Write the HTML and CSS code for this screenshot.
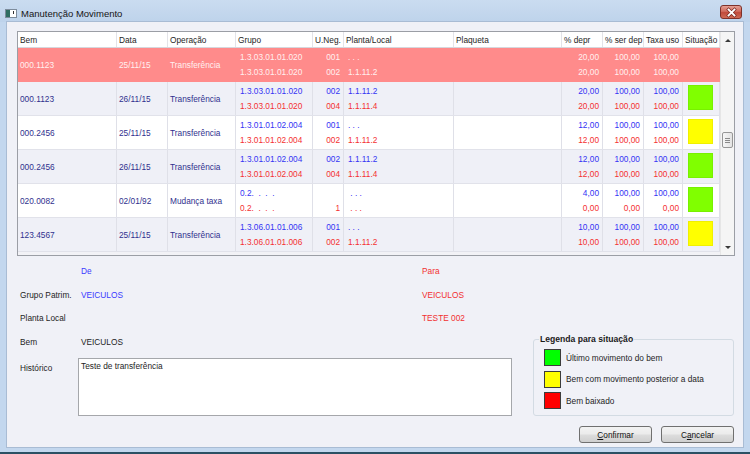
FILE: index.html
```html
<!DOCTYPE html>
<html>
<head>
<meta charset="utf-8">
<link rel="stylesheet" href="styles.css">
</head>
<body>
<div class="window">
  <div class="titlebar">
    <svg class="appicon" width="12" height="9" viewBox="0 0 12 9">
      <rect x="0.5" y="0.5" width="11" height="8" fill="#ffffff" stroke="#7d8c9c"/>
      <rect x="1" y="1" width="4" height="7" fill="#2f6e62"/>
      <rect x="8" y="2" width="1" height="3" fill="#333"/>
    </svg>
    <span class="title">Manutenção Movimento</span>
    <div class="close">
      <svg width="21" height="13" viewBox="0 0 21 13">
        <path d="M7.5 3.5 L13.5 9.5 M13.5 3.5 L7.5 9.5" stroke="#7a2a22" stroke-width="3.2" stroke-linecap="square"/>
        <path d="M7.5 3.5 L13.5 9.5 M13.5 3.5 L7.5 9.5" stroke="#ffffff" stroke-width="1.8" stroke-linecap="square"/>
      </svg>
    </div>
  </div>

  <div class="client">
    <div class="grid">
      <div class="table">
        <div class="row head">
          <div class="c">Bem</div>
          <div class="c">Data</div>
          <div class="c">Operação</div>
          <div class="c">Grupo</div>
          <div class="c">U.Neg.</div>
          <div class="c">Planta/Local</div>
          <div class="c">Plaqueta</div>
          <div class="c">% depr</div>
          <div class="c">% ser dep</div>
          <div class="c">Taxa uso</div>
          <div class="c">Situação</div>
        </div>

        <div class="row sel">
          <div class="c s">000.1123</div>
          <div class="c s">25/11/15</div>
          <div class="c s">Transferência</div>
          <div class="c t p3"><span>1.3.03.01.01.020</span><span>1.3.03.01.01.020</span></div>
          <div class="c t r"><span>001</span><span>002</span></div>
          <div class="c t p3"><span>. . .</span><span>1.1.11.2</span></div>
          <div class="c"></div>
          <div class="c t r"><span>20,00</span><span>20,00</span></div>
          <div class="c t r"><span>100,00</span><span>100,00</span></div>
          <div class="c t r"><span>100,00</span><span>100,00</span></div>
          <div class="c"></div>
        </div>

        <div class="row alt">
          <div class="c s">000.1123</div>
          <div class="c s">26/11/15</div>
          <div class="c s">Transferência</div>
          <div class="c t p3"><span class="b">1.3.03.01.01.020</span><span class="v">1.3.03.01.01.020</span></div>
          <div class="c t r"><span class="b">002</span><span class="v">004</span></div>
          <div class="c t p3"><span class="b">1.1.11.2</span><span class="v">1.1.11.4</span></div>
          <div class="c"></div>
          <div class="c t r"><span class="b">20,00</span><span class="v">20,00</span></div>
          <div class="c t r"><span class="b">100,00</span><span class="v">100,00</span></div>
          <div class="c t r"><span class="b">100,00</span><span class="v">100,00</span></div>
          <div class="c"><div class="sw green"></div></div>
        </div>

        <div class="row">
          <div class="c s">000.2456</div>
          <div class="c s">25/11/15</div>
          <div class="c s">Transferência</div>
          <div class="c t p3"><span class="b">1.3.01.01.02.004</span><span class="v">1.3.01.01.02.004</span></div>
          <div class="c t r"><span class="b">001</span><span class="v">002</span></div>
          <div class="c t p3"><span class="b">. . .</span><span class="v">1.1.11.2</span></div>
          <div class="c"></div>
          <div class="c t r"><span class="b">12,00</span><span class="v">12,00</span></div>
          <div class="c t r"><span class="b">100,00</span><span class="v">100,00</span></div>
          <div class="c t r"><span class="b">100,00</span><span class="v">100,00</span></div>
          <div class="c"><div class="sw yellow"></div></div>
        </div>

        <div class="row alt">
          <div class="c s">000.2456</div>
          <div class="c s">26/11/15</div>
          <div class="c s">Transferência</div>
          <div class="c t p3"><span class="b">1.3.01.01.02.004</span><span class="v">1.3.01.01.02.004</span></div>
          <div class="c t r"><span class="b">002</span><span class="v">004</span></div>
          <div class="c t p3"><span class="b">1.1.11.2</span><span class="v">1.1.11.4</span></div>
          <div class="c"></div>
          <div class="c t r"><span class="b">12,00</span><span class="v">12,00</span></div>
          <div class="c t r"><span class="b">100,00</span><span class="v">100,00</span></div>
          <div class="c t r"><span class="b">100,00</span><span class="v">100,00</span></div>
          <div class="c"><div class="sw green"></div></div>
        </div>

        <div class="row">
          <div class="c s">020.0082</div>
          <div class="c s">02/01/92</div>
          <div class="c s">Mudança taxa</div>
          <div class="c t p3"><span class="b">0.2.&nbsp; .&nbsp; .&nbsp; .</span><span class="v">0.2.&nbsp; .&nbsp; .&nbsp; .</span></div>
          <div class="c t r"><span class="b">&nbsp;</span><span class="v">1</span></div>
          <div class="c t p3"><span class="b">&nbsp;. . .</span><span class="v">&nbsp;. . .</span></div>
          <div class="c"></div>
          <div class="c t r"><span class="b">4,00</span><span class="v">0,00</span></div>
          <div class="c t r"><span class="b">100,00</span><span class="v">0,00</span></div>
          <div class="c t r"><span class="b">100,00</span><span class="v">0,00</span></div>
          <div class="c"><div class="sw green"></div></div>
        </div>

        <div class="row alt">
          <div class="c s">123.4567</div>
          <div class="c s">25/11/15</div>
          <div class="c s">Transferência</div>
          <div class="c t p3"><span class="b">1.3.06.01.01.006</span><span class="v">1.3.06.01.01.006</span></div>
          <div class="c t r"><span class="b">001</span><span class="v">002</span></div>
          <div class="c t p3"><span class="b">. . .</span><span class="v">1.1.11.2</span></div>
          <div class="c"></div>
          <div class="c t r"><span class="b">10,00</span><span class="v">10,00</span></div>
          <div class="c t r"><span class="b">100,00</span><span class="v">100,00</span></div>
          <div class="c t r"><span class="b">100,00</span><span class="v">100,00</span></div>
          <div class="c"><div class="sw yellow"></div></div>
        </div>
      </div>

      <div class="vscroll">
        <div class="sbtn"><span class="arr up"></span></div>
        <div class="track"><div class="thumb"><i></i><i></i><i></i></div></div>
        <div class="sbtn"><span class="arr down"></span></div>
      </div>
    </div>

    <div class="lower">
      <div class="form">
        <div class="lab"></div>
        <div class="val de">De</div>
        <div class="val para">Para</div>

        <div class="lab">Grupo Patrim.</div>
        <div class="val de">VEICULOS</div>
        <div class="val para">VEICULOS</div>

        <div class="lab">Planta Local</div>
        <div class="val de"></div>
        <div class="val para">TESTE 002</div>

        <div class="lab">Bem</div>
        <div class="val dark">VEICULOS</div>
        <div class="val"></div>

        <div class="lab hist">Histórico</div>
        <div class="memo-wrap"><div class="memo">Teste de transferência</div></div>
      </div>

      <div class="side">
        <fieldset class="legend">
          <legend>Legenda para situação</legend>
          <div class="items">
            <div class="item"><span class="lsw g"></span>Último movimento do bem</div>
            <div class="item"><span class="lsw y"></span>Bem com movimento posterior a data</div>
            <div class="item"><span class="lsw rd"></span>Bem baixado</div>
          </div>
        </fieldset>
        <div class="buttons">
          <div class="btn"><u>C</u>onfirmar</div>
          <div class="btn">C<u>a</u>ncelar</div>
        </div>
      </div>
    </div>
  </div>
  <div class="bottomline"></div>
</div>
</body>
</html>
```

FILE: styles.css
```css
* { box-sizing: border-box; }
html, body { margin: 0; padding: 0; }
body {
  width: 750px;
  height: 454px;
  overflow: hidden;
  background: #c3d7ee;
  font-family: "Liberation Sans", Arial, sans-serif;
  font-size: 8.3px;
  color: #1e1e1e;
}
.window {
  display: flex;
  flex-direction: column;
  width: 750px;
  height: 454px;
}

/* title bar */
.titlebar {
  height: 22px;
  flex: none;
  display: flex;
  align-items: flex-start;
  background: linear-gradient(#cadcf0, #bed3eb);
}
.appicon { margin: 9px 0 0 5px; flex: none; }
.title {
  margin: 8px 0 0 4px;
  font-size: 9.5px;
  line-height: 12px;
  color: #151515;
}
.close {
  margin: 5px 8px 0 auto;
  width: 22px;
  height: 14px;
  border: 1px solid #7e3129;
  border-radius: 3px;
  background: linear-gradient(#e5a093, #d06a5c 45%, #c04a3b 55%, #cf6a55);
  display: flex;
  align-items: center;
  justify-content: center;
  overflow: hidden;
}
.close svg { display: block; margin: -1px; }

/* client area */
.client {
  margin: 0 7px;
  height: 425px;
  flex: none;
  background: #f0f1f7;
  box-shadow: 0 0 0 1px #a9bcd4;
  padding: 9px 0 0 10px;
}

/* grid */
.grid {
  width: 718px;
  height: 225px;
  border: 1px solid #9b9ea5;
  display: flex;
  background: #f2f2f6;
}
.table {
  width: 702px;
  display: flex;
  flex-direction: column;
}
.row {
  display: grid;
  grid-template-columns: 99px 51px 68px 77px 31px 110px 108px 41px 41px 39px 37px;
  height: 34px;
  flex: none;
  background: #ffffff;
  border-bottom: 1px solid #e1e2ea;
}
.row.alt { background: #eff0f7; }
.c {
  border-right: 1px solid #dfe0e8;
  padding: 0 3px 0 2px;
  display: flex;
  flex-direction: column;
  white-space: nowrap;
  overflow: hidden;
}
.c.s {
  justify-content: center;
  line-height: 12px;
  padding-top: 1px;
  color: #30308e;
}
.c.t {
  padding-top: 2px;
  line-height: 15px;
}
.c.p3 { padding-left: 4px; }
.c.r { align-items: flex-end; }
.b { color: #3434f4; }
.v { color: #f43030; }

.row.head {
  height: 16px;
  background: #ffffff;
  border-bottom: 1px solid #d6d7dd;
}
.head .c {
  line-height: 15px;
  padding-left: 2px;
  padding-top: 1px;
  color: #1e1e1e;
  border-right-color: #e3e3e8;
}

.row.sel { background: #ff8b8b; border-bottom-color: #ff8b8b; }
.sel .c { border-right-color: #ff8b8b; color: #fff0f0; }

.sw {
  width: 25px;
  height: 25px;
  margin: 3px 0 0 3px;
  border: 1px solid rgba(0, 0, 0, 0.06);
}
.sw.green { background: #80ff00; }
.sw.yellow { background: #ffff00; }

/* scrollbar */
.vscroll {
  width: 14px;
  display: flex;
  flex-direction: column;
  background: #f5f5f5;
  border-left: 1px solid #e6e6e6;
}
.sbtn {
  height: 16px;
  flex: none;
  display: flex;
  align-items: center;
  justify-content: center;
}
.arr {
  width: 0;
  height: 0;
  border-left: 3px solid transparent;
  border-right: 3px solid transparent;
}
.arr.up { border-bottom: 3px solid #3a3a3a; }
.arr.down { border-top: 3px solid #3a3a3a; }
.track { flex: 1; padding: 84px 0 0 1px; }
.thumb {
  width: 11px;
  height: 16px;
  border: 1px solid #979797;
  border-radius: 2px;
  background: linear-gradient(90deg, #f7f7f7, #e3e3e3);
  display: flex;
  flex-direction: column;
  align-items: center;
  justify-content: center;
  gap: 1px;
}
.thumb i {
  display: block;
  width: 5px;
  height: 1px;
  background: #8a8a8a;
}

/* lower area */
.lower {
  display: flex;
  padding-left: 3px;
}
.form {
  width: 495px;
  padding-top: 3px;
  display: grid;
  grid-template-columns: 60px 341px 91px;
  grid-template-rows: 24px 24px 22px 26px 61px;
  align-items: center;
}
.lab { color: #1e1e1e; line-height: 12px; }
.val { line-height: 12px; padding-left: 1px; }
.val.de { color: #3a3aff; }
.val.para { color: #f23030; }
.val.dark { color: #1e1e1e; }
.lab.hist { align-self: start; padding-top: 7px; }
.memo-wrap {
  grid-column: 2 / 4;
  align-self: start;
  padding-top: 3px;
}
.memo {
  margin-left: -2px;
  width: 434px;
  height: 58px;
  background: #ffffff;
  border: 1px solid #a5a7ab;
  padding: 1px 2px;
  line-height: 12px;
  color: #1e1e1e;
}

.side {
  margin-left: 18px;
  width: 201px;
  display: flex;
  flex-direction: column;
}
.legend {
  margin: 77px 0 0 0;
  padding: 0 0 0 10px;
  height: 83px;
  border: 1px solid #d3dbe3;
  border-radius: 3px;
  min-width: 0;
}
.legend legend {
  padding: 0 1px;
  margin-left: -5px;
  font-weight: bold;
  font-size: 8.6px;
  line-height: 12px;
  color: #1a1a1a;
}
.items {
  padding-top: 4px;
  display: flex;
  flex-direction: column;
  gap: 4.5px;
}
.item {
  display: flex;
  align-items: center;
  height: 17px;
  line-height: 12px;
  color: #1e1e1e;
}
.lsw {
  width: 17px;
  height: 17px;
  border: 1px solid #3c3c3c;
  margin-right: 5px;
  flex: none;
}
.lsw.g { background: #00ff00; }
.lsw.y { background: #ffff00; }
.lsw.rd { background: #ff0000; }

.buttons {
  margin-top: 10px;
  display: flex;
  justify-content: flex-end;
  gap: 9px;
}
.btn {
  width: 73px;
  height: 17px;
  border: 1px solid #707070;
  border-radius: 3px;
  background: linear-gradient(#f3f3f3, #ebebeb 48%, #dddddd 52%, #cfcfcf);
  display: flex;
  align-items: center;
  justify-content: center;
  color: #111;
  line-height: 12px;
}

.bottomline {
  margin-top: 5px;
  height: 2px;
  flex: none;
  background: #2b5064;
}
```
